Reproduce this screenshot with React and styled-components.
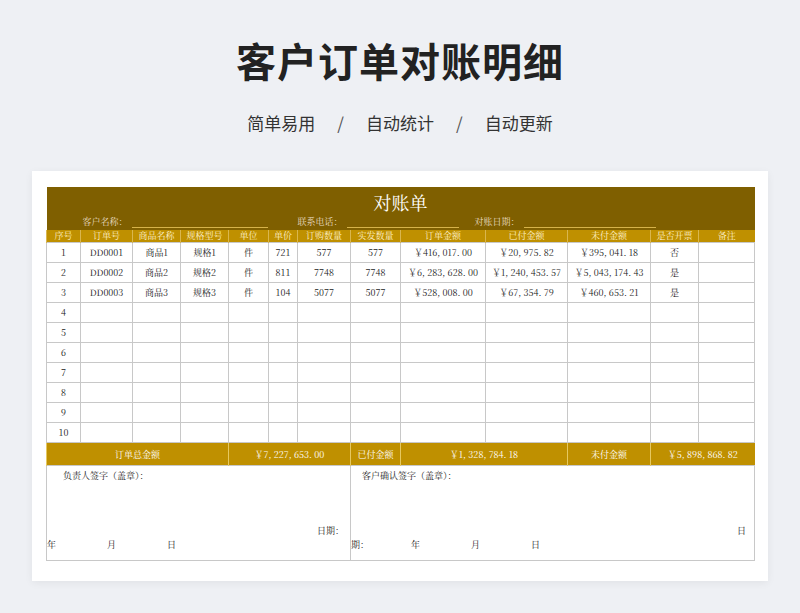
import React from 'react';
import styled, { createGlobalStyle } from 'styled-components';

const Global = createGlobalStyle`
  body { margin: 0; background: #eef0f4; font-family: "Noto Sans CJK SC", "Noto Sans", sans-serif; }
`;

const Page = styled.div`
  width: 800px;
  height: 613px;
  display: flex;
  flex-direction: column;
  align-items: center;
`;

const Title = styled.h1`
  margin: 36px 0 0;
  height: 48px;
  font-size: 40px;
  line-height: 48px;
  font-weight: 700;
  color: #222;
  letter-spacing: 1px;
`;

const Sub = styled.div`
  margin-top: 26px;
  font-size: 17px;
  color: #333;
  display: flex;
  gap: 22px;
  span.sep { color: #555; }
`;

const Card = styled.div`
  margin-top: 36px;
  width: 736px;
  height: 410px;
  background: #fff;
  box-shadow: 0 2px 8px rgba(0,0,0,0.06);
  padding: 16px 14px;
  box-sizing: border-box;
`;

const Sheet = styled.table`
  width: 708px;
  border-collapse: collapse;
  table-layout: fixed;
  font-family: "Noto Serif CJK SC", "Liberation Serif", "Noto Sans CJK SC", serif;
  font-size: 9px;
  color: #222;
`;

const Banner = styled.td`
  background: #7f5f00;
  color: #fff;
  height: 43px;
  padding: 0;
  vertical-align: top;
`;

const BannerTitle = styled.div`
  text-align: center;
  font-size: 18px;
  line-height: 26px;
  padding-top: 2px;
`;

const InfoRow = styled.div`
  display: flex;
  align-items: flex-end;
  font-size: 9px;
  color: #e8dcc0;
  padding-left: 36px;
  height: 13px;
`;

const Line = styled.span`
  display: inline-block;
  width: ${p => p.w}px;
  border-bottom: 1px solid #d6b24a;
  margin: 0 ${p => p.mr}px 0 4px;
`;

const Head = styled.th`
  background: #bf9000;
  color: #fff2cc;
  font-weight: 400;
  height: 12px;
  padding: 0;
  line-height: 12px;
  border-left: 1px solid #d9b64e;
`;

const Cell = styled.td`
  border: 1px solid #c8c8c8;
  height: 19px;
  padding: 0;
  text-align: center;
`;

const Total = styled.td`
  background: #bf9000;
  color: #fff;
  height: 22px;
  padding: 0;
  text-align: center;
  border-left: 1px solid #e6c860;
`;

const Sign = styled.td`
  border: 1px solid #c8c8c8;
  height: 94px;
  padding: 0;
  vertical-align: top;
  position: relative;
`;

const SignLabel = styled.div`
  padding: 3px 0 0 ${p => p.pl}px;
`;

const SignDate = styled.div`
  position: absolute;
  right: ${p => p.r}px;
  top: 58px;
`;

const SignYmd = styled.div`
  position: absolute;
  left: 0;
  top: 72px;
  display: flex;
  span { display: inline-block; width: ${p => p.w}px; }
`;

const widths = [34, 52, 48, 48, 40, 29, 53, 50, 85, 82, 83, 48, 56];
const heads = ['序号', '订单号', '商品名称', '规格型号', '单位', '单价', '订购数量', '实发数量', '订单金额', '已付金额', '未付金额', '是否开票', '备注'];
const rows = [
  ['1', 'DD0001', '商品1', '规格1', '件', '721', '577', '577', '￥416, 017. 00', '￥20, 975. 82', '￥395, 041. 18', '否', ''],
  ['2', 'DD0002', '商品2', '规格2', '件', '811', '7748', '7748', '￥6, 283, 628. 00', '￥1, 240, 453. 57', '￥5, 043, 174. 43', '是', ''],
  ['3', 'DD0003', '商品3', '规格3', '件', '104', '5077', '5077', '￥528, 008. 00', '￥67, 354. 79', '￥460, 653. 21', '是', ''],
];
for (let i = 4; i <= 10; i++) rows.push([String(i), '', '', '', '', '', '', '', '', '', '', '', '']);

export default function App() {
  return (
    <Page>
      <Global />
      <Title>客户订单对账明细</Title>
      <Sub><span>简单易用</span><span className="sep">/</span><span>自动统计</span><span className="sep">/</span><span>自动更新</span></Sub>
      <Card>
        <Sheet>
          <colgroup>{widths.map((w, i) => <col key={i} style={{ width: w }} />)}</colgroup>
          <tbody>
            <tr>
              <Banner colSpan={13}>
                <BannerTitle>对账单</BannerTitle>
                <InfoRow>
                  客户名称：<Line w={136} mr={30} />
                  联系电话：<Line w={112} mr={16} />
                  对账日期：<Line w={132} mr={0} />
                </InfoRow>
              </Banner>
            </tr>
            <tr>{heads.map(h => <Head key={h}>{h}</Head>)}</tr>
            {rows.map(r => (
              <tr key={r[0]}>{r.map((c, i) => <Cell key={i}>{c}</Cell>)}</tr>
            ))}
            <tr>
              <Total colSpan={4}>订单总金额</Total>
              <Total colSpan={3}>￥7, 227, 653. 00</Total>
              <Total>已付金额</Total>
              <Total colSpan={2}>￥1, 328, 784. 18</Total>
              <Total>未付金额</Total>
              <Total colSpan={2}>￥5, 898, 868. 82</Total>
            </tr>
            <tr>
              <Sign colSpan={7}>
                <SignLabel pl={16}>负责人签字（盖章）：</SignLabel>
                <SignDate r={6}>日期：</SignDate>
                <SignYmd w={60}><span>年</span><span>月</span><span>日</span></SignYmd>
              </Sign>
              <Sign colSpan={6}>
                <SignLabel pl={11}>客户确认签字（盖章）：</SignLabel>
                <SignDate r={8}>日</SignDate>
                <SignYmd w={60}><span>期：</span><span style={{ width: 60 }}>年</span><span>月</span><span>日</span></SignYmd>
              </Sign>
            </tr>
          </tbody>
        </Sheet>
      </Card>
    </Page>
  );
}
